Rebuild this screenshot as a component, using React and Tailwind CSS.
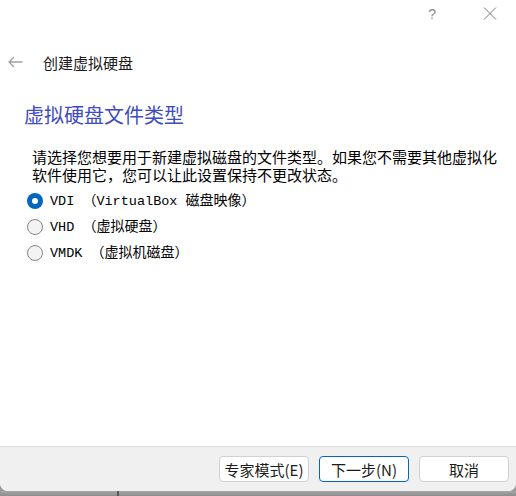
import { useState } from "react";

const options = [
  { id: "vdi", code: "VDI", latin: "VirtualBox ", cjk: "磁盘映像" },
  { id: "vhd", code: "VHD", latin: "", cjk: "虚拟硬盘" },
  { id: "vmdk", code: "VMDK", latin: "", cjk: "虚拟机磁盘" },
];

const Radio = ({ checked }) =>
  checked ? (
    <span className="flex h-[16px] w-[16px] items-center justify-center rounded-full bg-[#0067c0]">
      <span className="h-[6px] w-[6px] rounded-full bg-white" />
    </span>
  ) : (
    <span className="h-[16px] w-[16px] rounded-full border border-[#858585] bg-[#f3f3f3]" />
  );

const FooterButton = ({ children, focused }) => (
  <button
    className={`h-[26px] w-[90px] rounded-[4px] bg-white text-[15px] leading-none text-[#1a1a1a] ${
      focused ? "border border-[#0067c0]" : "border border-[#d0d0d0]"
    }`}
  >
    {children}
  </button>
);

export default function App() {
  const [format, setFormat] = useState("vdi");

  return (
    <div className="flex h-[496px] w-[516px] flex-col bg-[#9a9a9a] font-['Noto_Sans_CJK_SC',sans-serif]">
      <div className="flex h-[491px] flex-col overflow-hidden rounded-b-[8px] bg-white">
        {/* title bar */}
        <div className="flex h-[27px] items-center justify-end pr-[19px]">
          <span className="text-[14px] leading-none text-[#8c8c8c] font-['Liberation_Sans',sans-serif]">?</span>
          <svg className="ml-[47px]" width="14" height="13" viewBox="0 0 14 13">
            <path d="M1 0.5 L13 12.5 M13 0.5 L1 12.5" stroke="#7a7a7a" strokeWidth="1" fill="none" />
          </svg>
        </div>

        {/* wizard header */}
        <div className="mt-[13px] flex h-[44px] items-center pl-[8px]">
          <svg width="15" height="12" viewBox="0 0 15 12">
            <path d="M14.5 6 H1 M6 1 L1 6 L6 11" stroke="#a0a0a0" strokeWidth="1.3" fill="none" />
          </svg>
          <span className="ml-[20px] text-[15px] leading-none text-[#1a1a1a]">创建虚拟硬盘</span>
        </div>

        <h1 className="mt-[17px] pl-[24px] text-[20px] leading-[28px] text-[#3f4cc0]">虚拟硬盘文件类型</h1>

        <p className="mt-[19px] whitespace-nowrap pl-[32px] text-[15px] leading-[18px] text-black">
          请选择您想要用于新建虚拟磁盘的文件类型。如果您不需要其他虚拟化
          <br />
          软件使用它，您可以让此设置保持不更改状态。
        </p>

        <div className="mt-[4px] flex flex-col">
          {options.map((o) => (
            <label
              key={o.id}
              onClick={() => setFormat(o.id)}
              className="flex h-[26px] cursor-pointer items-center gap-[7px] pl-[27px] text-[14px] text-black"
            >
              <Radio checked={format === o.id} />
              <span className="whitespace-nowrap">
                <span className="font-['Liberation_Mono',monospace] text-[13.5px]">{o.code} </span>
                （
                {o.latin && <span className="font-['Liberation_Mono',monospace] text-[13.5px]">{o.latin}</span>}
                {o.cjk}）
              </span>
            </label>
          ))}
        </div>

        <div className="flex-1" />

        {/* footer */}
        <div className="flex h-[45px] items-center justify-end gap-[10px] border-t border-[#dcdcdc] bg-[#f0f0f0] pr-[7px]">
          <FooterButton>专家模式(E)</FooterButton>
          <FooterButton focused>下一步(N)</FooterButton>
          <FooterButton>取消</FooterButton>
        </div>
      </div>

      {/* desktop behind the window */}
      <div className="flex flex-1 bg-gradient-to-b from-[#a6a6a6] to-[#8c8c8c]">
        <div className="w-[117px]" />
        <div className="w-[2px] bg-[#5a5a5a]" />
      </div>
    </div>
  );
}
